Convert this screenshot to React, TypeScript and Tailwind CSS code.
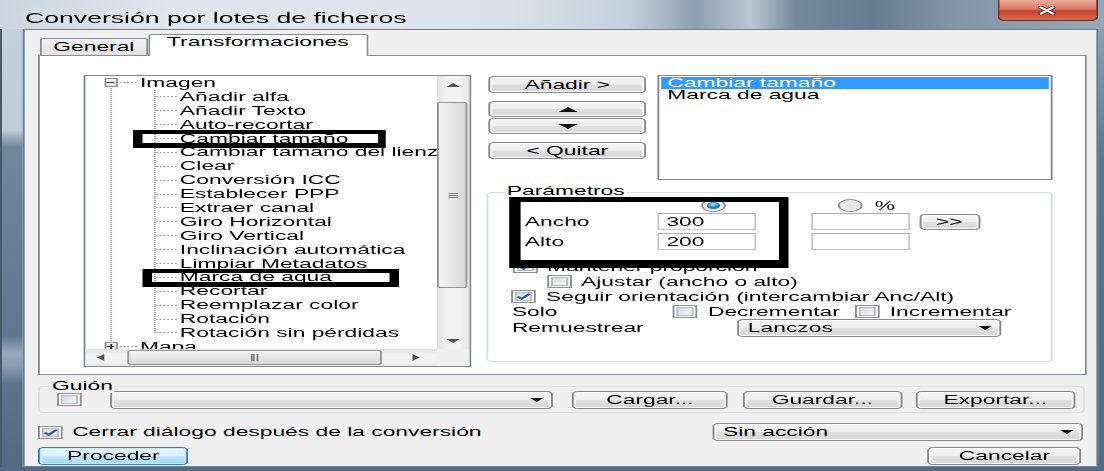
import React from "react";

// Batch-conversion dialog, "Transformaciones" tab.
// Laid out at 1/1.9 width and widened with scale-x, like the stretched window.

const btn =
  "flex items-center justify-center rounded-[3px] border border-[#8a8a8a] bg-[linear-gradient(180deg,#f6f6f6_0%,#ededed_48%,#e0e0e0_52%,#d6d6d6_100%)] shadow-[inset_0_0_0_1px_#fbfbfb] whitespace-nowrap";

const dots = "border-[#a3a3a3]";

const leaves = [
  "Añadir alfa",
  "Añadir Texto",
  "Auto-recortar",
  "Cambiar tamaño",
  "Cambiar tamaño del lienzo",
  "Clear",
  "Conversión ICC",
  "Establecer PPP",
  "Extraer canal",
  "Giro Horizontal",
  "Giro Vertical",
  "Inclinación automática",
  "Limpiar Metadatos",
  "Marca de agua",
  "Recortar",
  "Reemplazar color",
  "Rotación",
  "Rotación sin pérdidas",
];

type Dir = "up" | "down" | "left" | "right";

const triPath: Record<Dir, string> = {
  up: "M0 10L5 0L10 10Z",
  down: "M0 0L10 0L5 10Z",
  left: "M10 0L10 10L0 5Z",
  right: "M0 0L10 5L0 10Z",
};

function Tri({ dir, className = "", color = "#111" }: { dir: Dir; className?: string; color?: string }) {
  return (
    <svg viewBox="0 0 10 10" preserveAspectRatio="none" className={`shrink-0 ${className}`}>
      <path d={triPath[dir]} fill={color} />
    </svg>
  );
}

function Check({ on = false, className = "" }: { on?: boolean; className?: string }) {
  return (
    <span
      className={`relative flex h-[13px] w-[13px] shrink-0 border border-[#8e8f8f] bg-white p-[1px] ${className}`}
    >
      <span className="h-full w-full border border-[#b4b9c0] bg-[linear-gradient(135deg,#d6dae0,#f5f6f8)]" />
      {on && (
        <svg viewBox="0 0 10 10" className="absolute inset-0 m-auto h-[9px] w-[9px]">
          <path d="M1.6 5.2L4 7.6L8.6 2" fill="none" stroke="#3d5595" strokeWidth="1.9" />
        </svg>
      )}
    </span>
  );
}

function Radio({ on = false, className = "" }: { on?: boolean; className?: string }) {
  return (
    <span
      className={`flex h-[13px] w-[13px] shrink-0 items-center justify-center rounded-full border border-[#8f8f8f] bg-[radial-gradient(circle,#dedede,#f8f8f8)] ${className}`}
    >
      {on && (
        <span className="h-[7px] w-[7px] rounded-full bg-[radial-gradient(circle_at_45%_35%,#a6e3ff,#1c7ab9_55%,#0d4d82)]" />
      )}
    </span>
  );
}

function Field({ value = "", className = "" }: { value?: string; className?: string }) {
  return (
    <span
      className={`flex h-[17px] shrink-0 items-center border border-[#c3c7cd] border-t-[#a9adb5] bg-white pl-[3.5px] ${className}`}
    >
      {value}
    </span>
  );
}

function Combo({ value = "", className = "" }: { value?: string; className?: string }) {
  return (
    <span
      className={`flex h-[18px] shrink-0 items-center rounded-[3px] border border-[#8a8a8a] bg-[linear-gradient(180deg,#f6f6f6_0%,#ededed_48%,#e0e0e0_52%,#d6d6d6_100%)] shadow-[inset_0_0_0_1px_#fbfbfb] ${className}`}
    >
      <span className="flex-1 whitespace-nowrap pl-[4.8px]">{value}</span>
      <Tri dir="down" className="mr-[4.5px] h-[4px] w-[7px]" />
    </span>
  );
}

function Grip({ vertical = false }: { vertical?: boolean }) {
  if (vertical) {
    return (
      <span className="flex h-[7px] gap-[0.8px]">
        <span className="w-[0.8px] bg-[#808080]" />
        <span className="w-[0.8px] bg-[#808080]" />
        <span className="w-[0.8px] bg-[#808080]" />
      </span>
    );
  }
  return (
    <span className="flex w-[5px] flex-col gap-[1px]">
      <span className="h-px bg-[#808080]" />
      <span className="h-px bg-[#808080]" />
      <span className="h-px bg-[#808080]" />
    </span>
  );
}

function TreeRoot({ label, open = false }: { label: string; open?: boolean }) {
  return (
    <div className="flex h-[13.9px] items-center">
      <span className="relative ml-[10px] flex h-[9px] w-[7px] shrink-0 items-center justify-center border border-[#929292] bg-[linear-gradient(180deg,#ffffff,#e2e2e2)]">
        <span className="h-px w-[3.5px] bg-[#333]" />
        {!open && <span className="absolute h-[5px] w-[0.6px] bg-[#333]" />}
      </span>
      <span className={`ml-[1px] w-[9px] shrink-0 border-t border-dotted ${dots}`} />
      <span className="ml-[2px] whitespace-nowrap">{label}</span>
    </div>
  );
}

function TreeLeaf({ label }: { label: string }) {
  return (
    <div className="flex h-[13.9px] items-center">
      <span className={`ml-[37px] w-[11px] shrink-0 border-t border-dotted ${dots}`} />
      <span className="ml-[2px] whitespace-nowrap">{label}</span>
    </div>
  );
}

function Tree() {
  return (
    <div className="flex h-[292px] w-[204.2px] shrink-0 flex-col border border-[#828790] bg-white">
      <div className="flex min-h-0 flex-1">
        <div className="relative min-w-0 flex-1 overflow-hidden">
          <div className={`absolute bottom-0 left-[13px] top-[7px] border-l border-dotted ${dots}`} />
          <div className={`absolute left-[36.6px] top-[14px] h-[243px] border-l border-dotted ${dots}`} />
          <TreeRoot label="Imagen" open />
          {leaves.map((t) => (
            <TreeLeaf key={t} label={t} />
          ))}
          <TreeRoot label="Mapa" />
          {/* marker boxes */}
          <div className="absolute left-[25.3px] top-[54px] h-[18px] w-[133.2px] border-b-[5px] border-l-[5.8px] border-r-[4.7px] border-t-[4px] border-black" />
          <div className="absolute left-[30.6px] top-[193px] h-[18px] w-[135.2px] border-b-[5px] border-l-[5.3px] border-r-[5.3px] border-t-[4px] border-black" />
        </div>
        <div className="flex w-[17px] shrink-0 flex-col bg-[linear-gradient(90deg,#e1e1e1,#f2f2f2_30%,#f2f2f2_70%,#e7e7e7)]">
          <div className="flex h-[17px] shrink-0 items-center justify-center">
            <Tri dir="up" className="h-[4px] w-[7px]" color="#505050" />
          </div>
          <div className="mx-[0.5px] mt-[9px] flex h-[186px] items-center justify-center rounded-[2px] border border-[#979797] bg-[linear-gradient(90deg,#f4f4f4,#e6e6e6_50%,#d6d6d6)]">
            <Grip />
          </div>
          <div className="flex-1" />
          <div className="flex h-[17px] shrink-0 items-center justify-center">
            <Tri dir="down" className="h-[4px] w-[7px]" color="#505050" />
          </div>
        </div>
      </div>
      <div className="flex h-[17px] shrink-0">
        <div className="flex min-w-0 flex-1 items-center bg-[linear-gradient(180deg,#e1e1e1,#f2f2f2_30%,#f2f2f2_70%,#e7e7e7)]">
          <div className="flex h-full w-[17px] shrink-0 items-center justify-center">
            <Tri dir="left" className="h-[7px] w-[4px]" color="#505050" />
          </div>
          <div className="ml-[5px] flex h-[15px] w-[134.3px] items-center justify-center rounded-[2px] border border-[#979797] bg-[linear-gradient(180deg,#f4f4f4,#e6e6e6_50%,#d6d6d6)]">
            <Grip vertical />
          </div>
          <div className="flex-1" />
          <div className="flex h-full w-[22px] shrink-0 items-center justify-center">
            <Tri dir="right" className="h-[7px] w-[4px]" color="#505050" />
          </div>
        </div>
        <div className="w-[17px] shrink-0 bg-[#f0f0f0]" />
      </div>
    </div>
  );
}

function Parameters() {
  return (
    <div className="relative mt-[12px] h-[170px] rounded-[3px] border border-[#d5dfe5] pt-[6px]">
      <span className="absolute left-[8.5px] top-[-9.4px] bg-white px-[1px]">Parámetros</span>

      <div className="flex h-[13px] items-center">
        <Radio on className="ml-[111.5px]" />
        <Radio className="ml-[58.8px]" />
        <span className="ml-[6.9px]">%</span>
      </div>

      <div className="mt-[1px] flex h-[17px] items-center">
        <span className="ml-[19px] w-[70px] shrink-0">Ancho</span>
        <Field value="300" className="w-[52.1px]" />
        <Field className="ml-[28.4px] w-[52.1px]" />
        <button type="button" className={`${btn} ml-[4.8px] h-[16px] w-[32.1px]`}>
          &gt;&gt;
        </button>
      </div>

      <div className="mt-[3px] flex h-[17px] items-center">
        <span className="ml-[19px] w-[70px] shrink-0">Alto</span>
        <Field value="200" className="w-[52.1px]" />
        <Field className="ml-[28.4px] w-[52.1px]" />
      </div>

      <div className="mt-[9px] flex h-[15px] items-center pl-[12.7px]">
        <Check on />
        <span className="ml-[5px] whitespace-nowrap">Mantener proporción</span>
      </div>
      <div className="flex h-[15px] items-center pl-[30.6px]">
        <Check />
        <span className="ml-[5px] whitespace-nowrap">Ajustar (ancho o alto)</span>
      </div>
      <div className="flex h-[15px] items-center pl-[12.2px]">
        <Check on />
        <span className="ml-[5px] whitespace-nowrap">Seguir orientación (intercambiar Anc/Alt)</span>
      </div>
      <div className="flex h-[15px] items-center pl-[12.2px]">
        <span className="w-[84.2px] shrink-0">Solo</span>
        <span className="flex w-[96.3px] shrink-0 items-center">
          <Check />
          <span className="ml-[6px]">Decrementar</span>
        </span>
        <Check />
        <span className="ml-[5.4px]">Incrementar</span>
      </div>
      <div className="flex h-[18px] items-center pl-[12.2px]">
        <span className="w-[118.4px] shrink-0">Remuestrear</span>
        <Combo value="Lanczos" className="w-[139.5px]" />
      </div>

      <div className="absolute left-[11.1px] top-[4px] h-[71px] w-[146.3px] border-b-[8px] border-l-[6.8px] border-r-[5.3px] border-t-[5px] border-black" />
    </div>
  );
}

function TransformTab() {
  return (
    <div className="flex h-[320px] w-[552.1px] shrink-0 border border-[#898c95] bg-white pl-[22.7px] pt-[19px]">
      <Tree />
      <div className="ml-[8.4px] flex w-[297.9px] shrink-0 flex-col">
        <div className="flex h-[105px]">
          <div className="ml-[0.5px] flex w-[83.7px] shrink-0 flex-col">
            <button type="button" className={`${btn} mt-[1px] h-[17px]`}>
              Añadir &gt;
            </button>
            <button type="button" className={`${btn} mt-[8px] h-[16px]`}>
              <Tri dir="up" className="h-[5px] w-[10px]" />
            </button>
            <button type="button" className={`${btn} mt-[1px] h-[16px]`}>
              <Tri dir="down" className="h-[5px] w-[10px]" />
            </button>
            <button type="button" className={`${btn} mt-[8px] h-[17px]`}>
              &lt; Quitar
            </button>
          </div>
          <div className="ml-[5.8px] w-[207.9px] shrink-0 border border-[#828790] bg-white p-[1px]">
            <div className="h-[12px] bg-[#3399ff] pl-[3px] leading-[12px] text-white">Cambiar tamaño</div>
            <div className="pl-[3px] leading-[13px]">Marca de agua</div>
          </div>
        </div>
        <Parameters />
      </div>
    </div>
  );
}

function Client() {
  return (
    <div className="flex min-w-0 flex-1 flex-col border border-[#6c8196] bg-[#f0f0f0] pl-[7.4px]">
      <div className="ml-[1.05px] mt-[4px] flex h-[21px] items-end">
        <div className="flex h-[17px] w-[56.8px] shrink-0 justify-center rounded-t-[2px] border border-b-0 border-[#898c95] bg-[linear-gradient(180deg,#f3f3f3,#e2e2e2)] pt-[1px]">
          General
        </div>
        <div className="relative z-10 -mb-[1px] flex h-[22px] w-[115.8px] shrink-0 justify-center rounded-t-[2px] border border-b-0 border-[#898c95] bg-white">
          Transformaciones
        </div>
      </div>

      <TransformTab />

      <div className="relative mt-[11px] flex h-[27px] w-[551px] shrink-0 items-center rounded-[3px] border border-[#d5dfe5]">
        <span className="absolute left-[5.4px] top-[-8px] bg-[#f0f0f0] px-[1px]">Guión</span>
        <Check className="ml-[9.5px]" />
        <Combo className="ml-[14.4px] w-[233.2px]" />
        <button type="button" className={`${btn} ml-[10px] h-[18px] w-[82.1px]`}>
          Cargar...
        </button>
        <button type="button" className={`${btn} ml-[7.85px] h-[18px] w-[83.7px]`}>
          Guardar...
        </button>
        <button type="button" className={`${btn} ml-[7.4px] h-[18px] w-[83.7px]`}>
          Exportar...
        </button>
      </div>

      <div className="mt-[10px] flex h-[18px] items-center">
        <Check on />
        <span className="ml-[5px] whitespace-nowrap">Cerrar diálogo después de la conversión</span>
        <Combo value="Sin acción" className="ml-auto mr-[6.9px] w-[195.3px]" />
      </div>

      <div className="mt-[6px] flex h-[18px] items-center">
        <button
          type="button"
          className="flex h-[18px] w-[79.4px] items-center justify-center rounded-[3px] border border-[#3c7fb1] bg-[linear-gradient(180deg,#eaf6fd_0%,#d9f0fc_48%,#bee6fd_52%,#a7d9f5_100%)] shadow-[inset_0_0_0_1px_#c9e9f9]"
        >
          Proceder
        </button>
        <button type="button" className={`${btn} ml-auto mr-[8px] h-[18px] w-[80.5px]`}>
          Cancelar
        </button>
      </div>
    </div>
  );
}

export default function App() {
  return (
    <div className="h-[471px] w-[1104px] overflow-hidden bg-[#5f7890] font-['Liberation_Sans',Arial,sans-serif] text-[12px] leading-[14px] text-black">
      <div className="flex h-[471px] w-[581.05px] origin-top-left scale-x-[1.9] flex-col">
        {/* title bar */}
        <div className="flex h-[29px] shrink-0 items-start bg-[linear-gradient(90deg,#cbd6e0_0%,#dfe6ed_15%,#dbe3ea_45%,#c5d1dc_57%,#8d9fb1_63%,#bac7d3_68%,#75899d_72%,#677c91_79%,#8294a6_86%,#97a8b8_100%)]">
          <span className="ml-[13.2px] mt-[9.5px] whitespace-nowrap text-[14px] leading-[16px] [text-shadow:0_0_6px_rgba(255,255,255,0.9)]">
            Conversión por lotes de ficheros
          </span>
          <div className="ml-auto mr-[3.15px] flex h-[21px] w-[53.2px] items-center justify-center rounded-b-[4px] border border-t-0 border-[#6b2d24] bg-[linear-gradient(180deg,#e9ab9b_0%,#db7a63_45%,#c6432b_55%,#d9694e_100%)]">
            <svg viewBox="0 0 12 10" className="h-[9px] w-[12px]">
              <path d="M2.5 1.5L9.5 8.5M9.5 1.5L2.5 8.5" stroke="#5a1f17" strokeWidth="3.4" strokeLinecap="round" />
              <path d="M2.5 1.5L9.5 8.5M9.5 1.5L2.5 8.5" stroke="#ffffff" strokeWidth="2" strokeLinecap="round" />
            </svg>
          </div>
        </div>

        <div className="flex min-h-0 flex-1">
          <div className="w-[11.58px] shrink-0 border-l border-[#44586b] bg-[linear-gradient(180deg,#c4d0db_0%,#c0ccd8_23%,#6f879d_27%,#5e778e_70%,#98aabb_74%,#8a9daf_77%,#5a738a_81%,#526a82_100%)]" />
          <Client />
          <div className="w-[3.15px] shrink-0 bg-[linear-gradient(180deg,#8ea1b3_0%,#5d768d_30%,#526b83_100%)]" />
        </div>

        <div className="h-[4px] shrink-0 bg-[#536b83]" />
      </div>
    </div>
  );
}
